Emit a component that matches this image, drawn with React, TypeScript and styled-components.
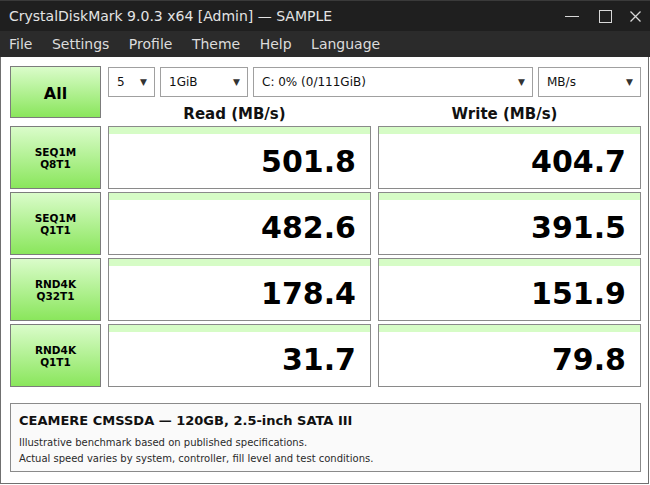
import { Fragment } from 'react';
import styled, { createGlobalStyle } from 'styled-components';

const GlobalStyle = createGlobalStyle`
    html, body {
        margin: 0;
        padding: 0;
        background: #ffffff;
    }
    body {
        font-family: "DejaVu Sans", "Liberation Sans", sans-serif;
    }
`;

const Window = styled.div`
    width: 650px;
    height: 485px;
    display: flex;
    flex-direction: column;
    box-sizing: border-box;
    overflow: hidden;
`;

const TitleBar = styled.div`
    height: 31px;
    background: #1f1f1f;
    border-top: 1px solid #3a3a3a;
    box-sizing: border-box;
    display: flex;
    align-items: center;
    padding-left: 9px;
    color: #e4e4e4;
    font-size: 14px;
`;

const TitleText = styled.div`
    flex: 1;
`;

const WinButtons = styled.div`
    display: flex;
    align-items: center;
    height: 100%;
`;

const WinButton = styled.div<{ $w: number }>`
    width: ${(p) => p.$w}px;
    height: 100%;
    display: flex;
    align-items: center;
    justify-content: center;
`;

const MenuBar = styled.div`
    height: 26px;
    background: #2b2b2b;
    display: flex;
    align-items: center;
    padding-left: 9px;
    gap: 19.5px;
    color: #dcdcdc;
    font-size: 14px;
`;

const Body = styled.div`
    flex: 1;
    border: 1px solid #707070;
    border-top: none;
    margin-right: 1px;
    margin-bottom: 1px;
    padding: 9px 6px 0 9px;
    display: flex;
    flex-direction: column;
`;

const Grid = styled.div`
    display: grid;
    grid-template-columns: 91px 263px 263px;
    column-gap: 7px;
    row-gap: 3px;
`;

const GreenButton = styled.div<{ $big?: boolean }>`
    box-sizing: border-box;
    height: ${(p) => (p.$big ? '52px' : '63px')};
    border: 1px solid #7c7c7c;
    background: linear-gradient(#dafcca, #8ae65c);
    display: flex;
    align-items: center;
    justify-content: center;
    text-align: center;
    font-weight: bold;
    color: #000;
    font-size: ${(p) => (p.$big ? '16px' : '10.5px')};
    line-height: 12px;
    padding-top: ${(p) => (p.$big ? '3px' : '0')};
`;

const TopArea = styled.div`
    grid-column: 2 / 4;
    display: flex;
    flex-direction: column;
`;

const Selects = styled.div`
    display: flex;
    gap: 5px;
    margin-top: 1px;
`;

const Select = styled.div<{ $w: number }>`
    box-sizing: border-box;
    width: ${(p) => p.$w}px;
    height: 30px;
    border: 1px solid #a0a0a0;
    background: #fff;
    display: flex;
    align-items: center;
    justify-content: space-between;
    padding: 0 7px 0 8px;
    font-size: 12px;
    color: #111;
`;

const Arrow = styled.span`
    font-size: 9px;
    color: #333;
`;

const Headers = styled.div`
    display: grid;
    grid-template-columns: 263px 263px;
    column-gap: 7px;
    margin-top: 8px;
`;

const Header = styled.div`
    text-align: center;
    font-size: 15px;
    line-height: 18px;
    font-weight: bold;
    color: #111;
    padding-right: 10px;
`;

const Result = styled.div`
    box-sizing: border-box;
    height: 63px;
    border: 1px solid #8a8a8a;
    background: #fff;
    display: flex;
    flex-direction: column;
`;

const Bar = styled.div`
    height: 7px;
    background: #d6fcc6;
`;

const Value = styled.div`
    flex: 1;
    display: flex;
    align-items: center;
    justify-content: flex-end;
    padding-right: 14px;
    font-size: 30px;
    font-weight: bold;
    color: #000;
`;

const Info = styled.div`
    margin-top: 16px;
    width: 631px;
    height: 69px;
    box-sizing: border-box;
    border: 1px solid #8a8a8a;
    background: #fafafa;
    padding: 8px 8px 0 8px;
    color: #222;
`;

const InfoTitle = styled.div`
    font-size: 13px;
    font-weight: bold;
    line-height: 17px;
    color: #111;
    margin-bottom: 6px;
`;

const InfoLine = styled.div`
    font-size: 10px;
    line-height: 16px;
    color: #2a2a2a;
`;

const rows = [
    { label: ['SEQ1M', 'Q8T1'], read: '501.8', write: '404.7' },
    { label: ['SEQ1M', 'Q1T1'], read: '482.6', write: '391.5' },
    { label: ['RND4K', 'Q32T1'], read: '178.4', write: '151.9' },
    { label: ['RND4K', 'Q1T1'], read: '31.7', write: '79.8' },
];

const menus = ['File', 'Settings', 'Profile', 'Theme', 'Help', 'Language'];

export default function App() {
    return (
        <>
            <GlobalStyle />
            <Window>
                <TitleBar>
                    <TitleText>CrystalDiskMark 9.0.3 x64 [Admin] — SAMPLE</TitleText>
                    <WinButtons>
                        <WinButton $w={36}>
                            <svg width="14" height="14" viewBox="0 0 14 14">
                                <line x1="0" y1="7.5" x2="14" y2="7.5" stroke="#d8d8d8" strokeWidth="1" />
                            </svg>
                        </WinButton>
                        <WinButton $w={30}>
                            <svg width="13" height="13" viewBox="0 0 13 13">
                                <rect x="0.5" y="0.5" width="12" height="12" fill="none" stroke="#d8d8d8" strokeWidth="1" />
                            </svg>
                        </WinButton>
                        <WinButton $w={30}>
                            <svg width="11" height="11" viewBox="0 0 11 11">
                                <path d="M0.5 0.5 L10.5 10.5 M10.5 0.5 L0.5 10.5" stroke="#d8d8d8" strokeWidth="1.3" />
                            </svg>
                        </WinButton>
                    </WinButtons>
                </TitleBar>
                <MenuBar>
                    {menus.map((m) => (
                        <span key={m}>{m}</span>
                    ))}
                </MenuBar>
                <Body>
                    <Grid>
                        <GreenButton $big>All</GreenButton>
                        <TopArea>
                            <Selects>
                                <Select $w={47}>5<Arrow>▼</Arrow></Select>
                                <Select $w={88}>1GiB<Arrow>▼</Arrow></Select>
                                <Select $w={280}>C: 0% (0/111GiB)<Arrow>▼</Arrow></Select>
                                <Select $w={103}>MB/s<Arrow>▼</Arrow></Select>
                            </Selects>
                            <Headers>
                                <Header>Read (MB/s)</Header>
                                <Header>Write (MB/s)</Header>
                            </Headers>
                        </TopArea>
                        {rows.map((r) => (
                            <Fragment key={r.label.join('-')}>
                                <GreenButton>
                                    {r.label[0]}
                                    <br />
                                    {r.label[1]}
                                </GreenButton>
                                <Result>
                                    <Bar />
                                    <Value>{r.read}</Value>
                                </Result>
                                <Result>
                                    <Bar />
                                    <Value>{r.write}</Value>
                                </Result>
                            </Fragment>
                        ))}
                    </Grid>
                    <Info>
                        <InfoTitle>CEAMERE CMSSDA — 120GB, 2.5-inch SATA III</InfoTitle>
                        <InfoLine>Illustrative benchmark based on published specifications.</InfoLine>
                        <InfoLine>Actual speed varies by system, controller, fill level and test conditions.</InfoLine>
                    </Info>
                </Body>
            </Window>
        </>
    );
}
